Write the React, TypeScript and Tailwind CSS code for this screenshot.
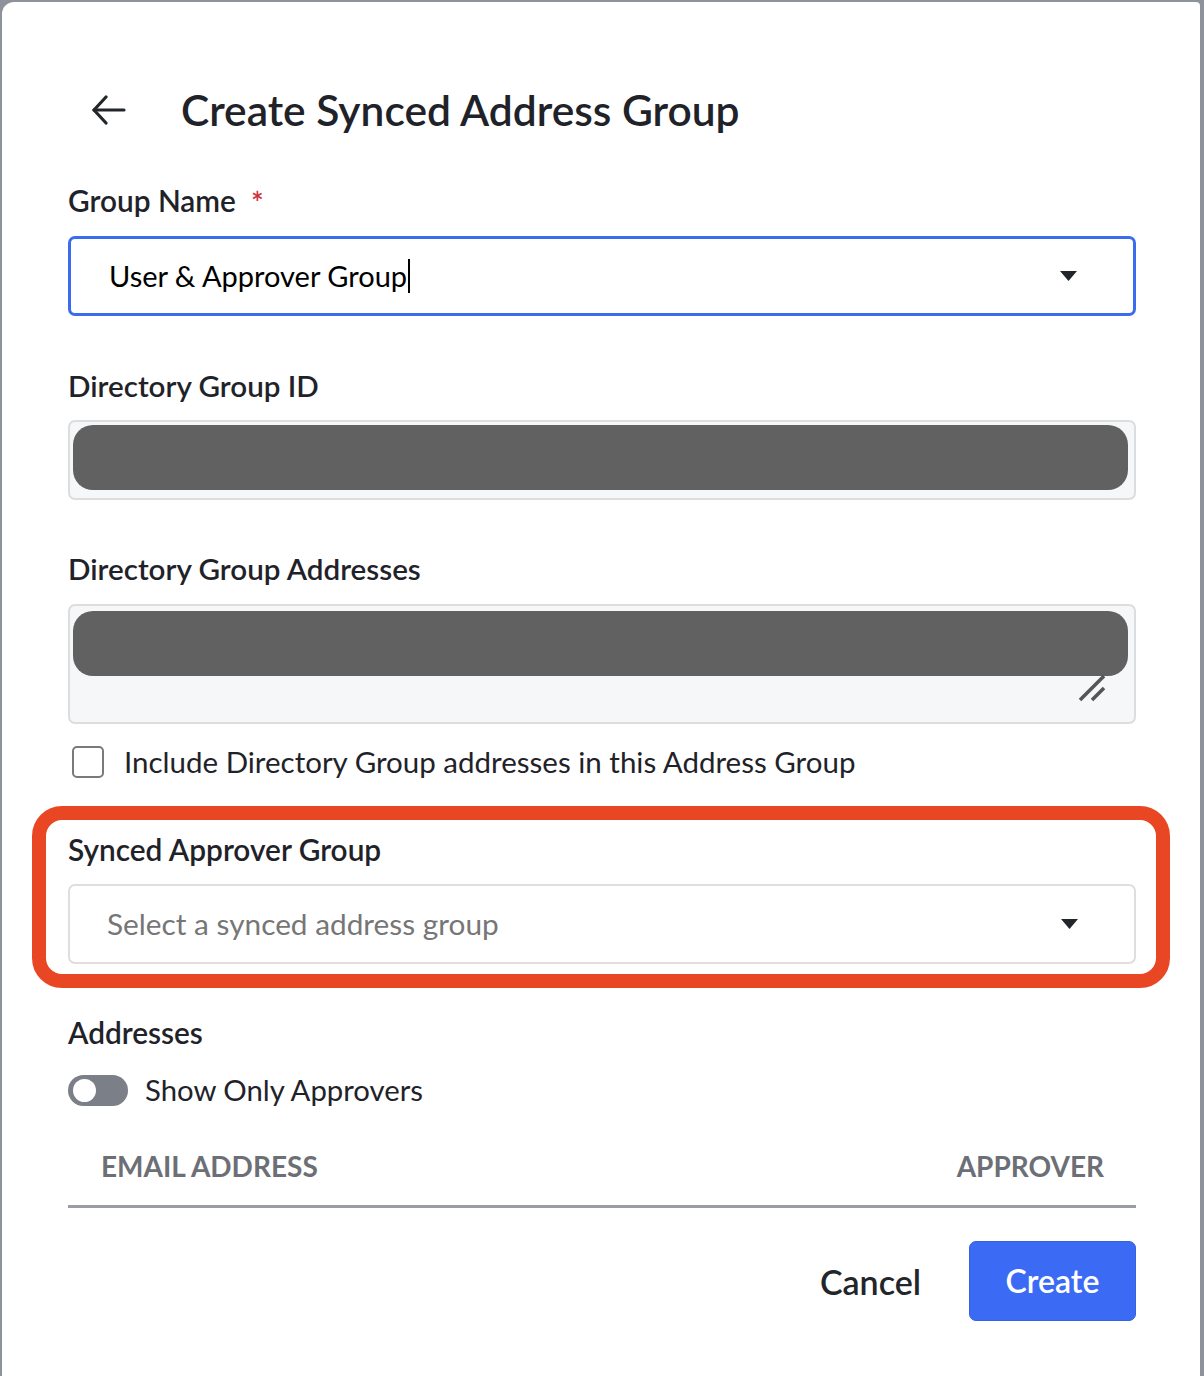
import { useState } from 'react';

const font = { fontFamily: 'Lato, "Open Sans", sans-serif' };

function Caret() {
  return (
    <svg width="17" height="10" viewBox="0 0 17 10" className="shrink-0">
      <path d="M0 0 H17 L8.5 10 Z" fill="#22262b" />
    </svg>
  );
}

function BackArrow() {
  return (
    <svg width="34" height="30" viewBox="0 0 34 30" fill="none" stroke="#22262b" strokeWidth={3.2} strokeLinecap="round" strokeLinejoin="round">
      <path d="M14 2 L2 15 L14 28" />
      <path d="M2 15 H32" />
    </svg>
  );
}

export default function App() {
  const [includeDir, setIncludeDir] = useState(false);
  const [onlyApprovers, setOnlyApprovers] = useState(false);

  return (
    <div className="min-h-screen bg-[#8e929a] pt-[2px] pl-[2px] pr-[4px]" style={font}>
      <div className="min-h-[1374px] bg-white rounded-tl-[12px] rounded-tr-[4px] pt-[76px] pl-[66px] pr-[64px] text-[#1f2329]">
        {/* Header */}
        <div className="flex items-center h-[64px]">
          <button className="ml-[24px] mr-[55px] flex items-center">
            <BackArrow />
          </button>
          <h1 className="text-[42.5px] font-semibold leading-none">Create Synced Address Group</h1>
        </div>

        {/* Group name */}
        <label className="mt-[39px] flex items-center h-[40px] text-[29.8px] font-semibold">
          Group Name <span className="ml-[15px] text-[#d0313d] text-[30px] leading-none mt-[2px]">*</span>
        </label>
        <div className="mt-[15px] h-[80px] border-[3px] border-[#3b6cf0] rounded-[7px] flex items-center pl-[38px] pr-[56px]">
          <span className="text-[29px] text-black">User &amp; Approver Group</span>
          <span className="w-[2px] h-[34px] bg-black ml-[1px]" />
          <div className="flex-1" />
          <Caret />
        </div>

        {/* Directory group ID */}
        <label className="mt-[50px] flex items-center h-[40px] text-[29.6px] font-semibold">Directory Group ID</label>
        <div className="mt-[14px] h-[80px] border-2 border-[#dcdddf] bg-[#f6f7f9] rounded-[7px] p-[3px] pr-[6px]">
          <div className="h-[65px] bg-[#616161] rounded-[20px]" />
        </div>

        {/* Directory group addresses */}
        <label className="mt-[49px] flex items-center h-[40px] text-[29.6px] font-semibold">Directory Group Addresses</label>
        <div className="mt-[15px] h-[120px] border-2 border-[#dcdddf] bg-[#f6f7f9] rounded-[7px] pt-[5px] pl-[3px] pr-[6px] relative">
          <div className="h-[65px] bg-[#616161] rounded-[20px]" />
          <svg className="absolute right-[28px] bottom-[20px]" width="28" height="28" viewBox="0 0 28 28" stroke="#555" strokeWidth={3.5}>
            <path d="M2 26 L26 2" />
            <path d="M14 26 L26 14" />
          </svg>
        </div>

        <label className="mt-[18px] h-[40px] flex items-center cursor-pointer">
          <input type="checkbox" className="sr-only" checked={includeDir} onChange={() => setIncludeDir(!includeDir)} />
          <span className="ml-[4px] w-[32px] h-[32px] border-2 border-[#7a7a7a] rounded-[5px] bg-white" />
          <span className="ml-[20px] text-[29.5px]">Include Directory Group addresses in this Address Group</span>
        </label>

        {/* Synced approver group (highlighted) */}
        <div className="mt-[24px] ml-[-36px] mr-[-34px] border-[14px] border-[#e94723] rounded-[30px] pt-[10px] pb-[10px] pl-[22px] pr-[20px]">
          <label className="flex items-center h-[40px] text-[29.8px] font-semibold">Synced Approver Group</label>
          <div className="mt-[14px] h-[80px] border-2 border-[#dedede] rounded-[7px] flex items-center pl-[37px] pr-[56px]">
            <span className="flex-1 text-[29.8px] text-[#767676]">Select a synced address group</span>
            <Caret />
          </div>
        </div>

        {/* Addresses */}
        <label className="mt-[25px] flex items-center h-[40px] text-[29.8px] font-semibold">Addresses</label>
        <label className="mt-[17px] h-[40px] flex items-center cursor-pointer">
          <input type="checkbox" className="sr-only" checked={onlyApprovers} onChange={() => setOnlyApprovers(!onlyApprovers)} />
          <span className="w-[60px] h-[31px] rounded-full bg-[#7b7f87] flex items-center px-[5px]">
            <span className="w-[23px] h-[23px] rounded-full bg-white" />
          </span>
          <span className="ml-[17px] text-[29.3px]">Show Only Approvers</span>
        </label>

        <div className="mt-[20px] h-[78px] pb-[4px] border-b-[3px] border-[#9a9da3] flex items-center justify-between pl-[33px] pr-[32px] text-[28px] font-bold text-[#6c6f75]">
          <span>EMAIL ADDRESS</span>
          <span>APPROVER</span>
        </div>

        {/* Footer actions */}
        <div className="mt-[33px] flex items-center justify-end">
          <button className="text-[34px] font-semibold text-[#22262b] mr-[48px]">Cancel</button>
          <button className="w-[167px] h-[80px] rounded-[7px] bg-[#3b6bf5] border border-[#3560de] text-white text-[32px] font-semibold">
            Create
          </button>
        </div>
      </div>
    </div>
  );
}
